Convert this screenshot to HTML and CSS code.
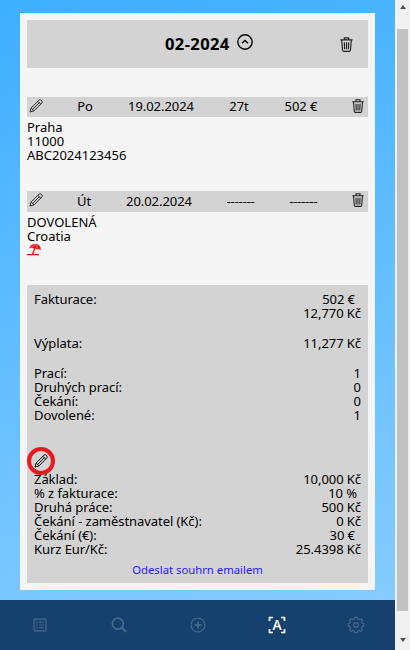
FILE: index.html
```html
<!DOCTYPE html>
<html lang="cs">
<head>
<meta charset="utf-8">
<title>02-2024</title>
<link rel="stylesheet" href="styles.css">
</head>
<body>
<svg class="defs" width="0" height="0">
  <symbol id="pencil" viewBox="0 0 14 14"><path d="M1 13l1.100-4L10.200 1q.8-.7 1.600 0l1.200 1.200q.7.800 0 1.600L5 11.900zM2.100 9L5 11.900M8.900 2.300l2.800 2.800M3.500 10.500l7-7" fill="none" stroke="currentColor" stroke-width=".95"/></symbol>
  <symbol id="trash" viewBox="0 0 12 14"><path d="M.3 2.700h11.400M4 2.500V.8h4v1.700M1.500 3l.8 9.200q.1 1.200 1 1.200h5.400q.9 0 1-1.200L10.500 3M4 4.800l.2 6.700M6 4.800v6.700M8 4.800l-.2 6.700" fill="none" stroke="currentColor" stroke-width="1.100"/></symbol>
</svg>
<div class="app">
  <div class="screen">
    <main class="panel">
      <header class="month">
        <h1>02-2024</h1>
        <svg class="chevron" viewBox="0 0 16 16"><circle cx="8" cy="8" r="7.200"/><path d="M5 9.300l3-2.800 3 2.800"/></svg>
        <svg class="trash"><use href="#trash"/></svg>
      </header>
      <section class="entry">
        <div class="bar">
          <svg class="pencil"><use href="#pencil"/></svg><span>Po</span><span>19.02.2024</span><span>27t</span><span>502 €</span><svg class="trash"><use href="#trash"/></svg>
        </div>
        <div class="details"><p>Praha</p><p>11000</p><p class="code">ABC2024123456</p></div>
      </section>
      <section class="entry holiday">
        <div class="bar">
          <svg class="pencil"><use href="#pencil"/></svg><span>Út</span><span>20.02.2024</span><span class="dash">-------</span><span class="dash">-------</span><svg class="trash"><use href="#trash"/></svg>
        </div>
        <div class="details"><p>DOVOLENÁ</p><p>Croatia</p>
          <svg class="umbrella" viewBox="0 0 14 12"><path d="M1.800 4.500Q4.500-.8 9-.1q5 1.100 4.800 6.100l-2.700-1.100-1.300.7-2.200-1.600-1.500.6-1.500-1.100z" fill="#e8100c"/><path d="M8 3.500L5.500 10.500M0 10.700h12" fill="none" stroke="#e8100c" stroke-width="1.300"/><path d="M5 3.300Q7 .6 9 .8M9.800 4.500Q10.500 2 9.500 1" fill="none" stroke="#f5f5f5" stroke-width=".5"/></svg>
        </div>
      </section>
      <section class="summary">
        <dl class="billing"><div><dt>Fakturace:</dt><dd class="euro">502 €</dd></div><div><dt></dt><dd>12,770 Kč</dd></div></dl>
        <dl class="payout"><div><dt>Výplata:</dt><dd>11,277 Kč</dd></div></dl>
        <dl class="counts">
          <div><dt>Prací:</dt><dd>1</dd></div><div><dt>Druhých prací:</dt><dd>0</dd></div><div><dt>Čekání:</dt><dd>0</dd></div><div><dt>Dovolené:</dt><dd>1</dd></div>
        </dl>
        <dl class="rates">
          <div><dt>Základ:</dt><dd>10,000 Kč</dd></div>
          <div><dt>% z fakturace:</dt><dd class="percent">10 %</dd></div>
          <div><dt>Druhá práce:</dt><dd>500 Kč</dd></div>
          <div><dt>Čekání - zaměstnavatel (Kč):</dt><dd>0 Kč</dd></div>
          <div><dt>Čekání (€):</dt><dd class="euro">30 €</dd></div>
          <div><dt>Kurz Eur/Kč:</dt><dd>25.4398 Kč</dd></div>
          <span class="marker"><svg class="pencil"><use href="#pencil"/></svg></span>
        </dl>
        <a class="send">Odeslat souhrn emailem</a>
      </section>
    </main>
    <nav class="tabs">
      <svg viewBox="0 0 20 20"><rect x="4.600" y="4.600" width="10.800" height="10.800" rx=".6"/><path d="M6.500 7.500h1.500M9 7.500h4.500M6.500 10h1.500M9 10h4.500M6.500 12.500h1.500M9 12.500h4.500"/></svg>
      <svg viewBox="0 0 20 20"><circle cx="9" cy="8.800" r="5" stroke-width="1.600"/><path d="M12.700 12.500l3.800 3.800" stroke-width="1.800"/></svg>
      <svg viewBox="0 0 20 20"><circle cx="10" cy="10" r="6.300"/><path d="M7 10h6M10 7v6" stroke-width="1.600"/></svg>
      <svg class="active" viewBox="0 0 20 20"><path d="M3.200 6.300V3.200H6.300M13.700 3.200h3.100V6.300M16.800 13.700v3.100H13.700M6.300 16.800H3.200V13.700"/><text x="10" y="14.500" text-anchor="middle">A</text></svg>
      <svg viewBox="0 0 20 20"><circle cx="10" cy="10" r="2.200"/><path d="M8.500 4.500L9 3h2l.5 1.500 1.400.6 1.500-.8 1.400 1.400-.8 1.500.6 1.400 1.500.4v2l-1.500.5-.6 1.400.8 1.500-1.400 1.400-1.500-.8-1.400.6L11 17H9l-.5-1.400-1.400-.6-1.500.8-1.400-1.400.8-1.500-.6-1.400L2.900 11V9l1.500-.4L5 7.200l-.8-1.500 1.400-1.400 1.500.8z" stroke-linejoin="round"/></svg>
    </nav>
  </div>
  <div class="scroll"><i class="up"></i><i class="thumb"></i><i class="down"></i></div>
</div>
</body>
</html>
```
FILE: styles.css
```css
* { box-sizing: border-box; }
body { margin: 0; overflow: hidden; font: 13px/14px "Noto Sans", sans-serif; color: #000; }
h1, p, dl, dd { margin: 0; }
svg { display: block; }
.defs { position: absolute; }
.app { display: flex; width: 410px; height: 650px; }
.screen { width: 395px; display: flex; flex-direction: column; justify-content: space-between; padding-top: 13px; background: linear-gradient(165deg, #3eafff, #86ccff 94%); }
.panel { width: 355px; height: 577px; margin-left: 20px; padding: 7px; background: #f5f5f5; }
.pencil { width: 14px; height: 14px; color: #222; }
.trash { width: 12px; height: 14px; color: #222; }
.month { height: 48px; margin-bottom: 29px; padding: 0 15px 0 138px; display: flex; align-items: center; background: #d3d3d3; }
.month h1 { width: 66px; font-size: 16.5px; line-height: 20px; letter-spacing: .4px; white-space: nowrap; }
.chevron { width: 16px; height: 16px; margin: -4px 0 0 6px; fill: none; stroke: #000; stroke-width: 1.4; }
.month .trash { width: 13px; height: 15px; margin-left: auto; }
.entry { height: 94px; }
.bar { height: 20px; padding-bottom: 2px; display: grid; grid-template-columns: 30px 56px 96px 60px 64px 35px; align-items: center; text-align: center; background: #d3d3d3; }
.holiday .bar { height: 21px; grid-template-columns: 30px 54px 96px 67px 59px 35px; }
.bar .pencil { margin: -1px 0 0 2px; }
.bar .trash { margin: -1px 4px 0 0; justify-self: end; }
.bar span { letter-spacing: -.05px; }
.bar .dash { letter-spacing: -.18px; }
.details { padding-top: 3px; }
.code { letter-spacing: 0; }
.umbrella { width: 14px; height: 12px; margin-top: 1px; }
.summary { height: 298px; padding: 7px 7px 0; display: flex; flex-direction: column; background: #d3d3d3; letter-spacing: -.06px; }
.summary dl > div { display: flex; justify-content: space-between; height: 14px; }
.billing, .payout { margin-bottom: 16px; }
.counts { margin-bottom: 50px; }
.euro { padding-right: 6px; }
.percent { padding-right: 4px; }
.rates { position: relative; }
.marker { position: absolute; left: -7px; top: -25px; width: 28px; height: 28px; display: grid; place-items: center; border: 4px solid #ed171d; border-radius: 50%; }
.marker .pencil { width: 14px; height: 14px; color: #000; }
.send { align-self: center; margin-top: 7px; font-size: 11.3px; letter-spacing: 0; color: #2a20ff; }
.tabs { height: 50px; display: flex; justify-content: space-around; align-items: center; background: #16406d; color: #486889; fill: none; stroke: currentColor; stroke-width: 1.1; }
.tabs svg { width: 22px; height: 22px; }
.tabs .active { color: #fff; stroke-width: 1.5; }
.tabs text { font: 600 12.5px "Open Sans", sans-serif; fill: currentColor; stroke: none; }
.scroll { width: 15px; display: flex; flex-direction: column; align-items: center; background: #f1f1f1; }
.up, .down { border: 3.5px solid transparent; }
.up { margin-top: 2px; border-bottom: 4px solid #505050; }
.thumb { width: 11px; height: 582px; margin: 20px 0 25px; background: #c1c1c1; }
.down { margin-top: 2px; border-top: 4px solid #505050; }
```
